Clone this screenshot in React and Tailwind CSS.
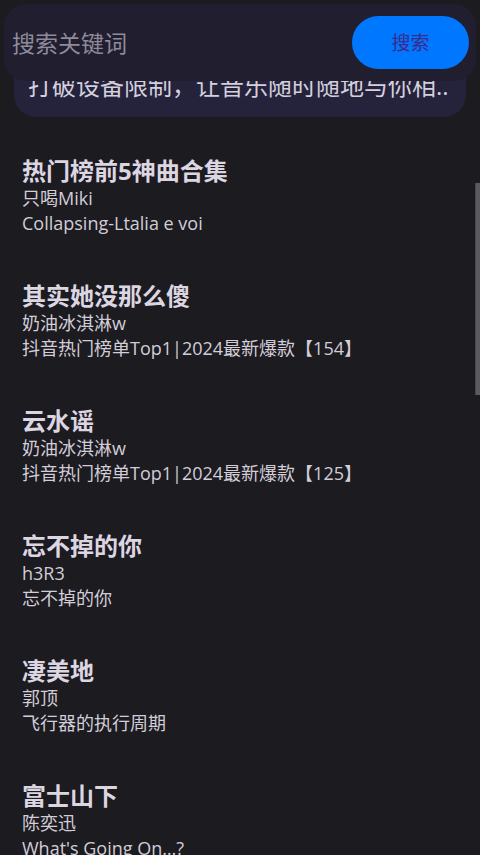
import React from "react";

const songs = [
  { title: "热门榜前5神曲合集", artist: "只喝Miki", album: "Collapsing-Ltalia e voi" },
  { title: "其实她没那么傻", artist: "奶油冰淇淋w", album: "抖音热门榜单Top1|2024最新爆款【154】" },
  { title: "云水谣", artist: "奶油冰淇淋w", album: "抖音热门榜单Top1|2024最新爆款【125】" },
  { title: "忘不掉的你", artist: "h3R3", album: "忘不掉的你" },
  { title: "凄美地", artist: "郭顶", album: "飞行器的执行周期" },
  { title: "富士山下", artist: "陈奕迅", album: "What's Going On…?" },
];

const font = { fontFamily: '"Open Sans", "Noto Sans CJK SC", "Noto Sans", sans-serif' };

const SongItem = ({ title, artist, album }) => (
  <div className="h-[125px] flex flex-col">
    <div className="text-[24px] leading-[30px] font-bold text-[#dcd6e2]">{title}</div>
    <div className="text-[18px] leading-[25px] text-[#d2cdd8]">{artist}</div>
    <div className="text-[18px] leading-[25px] text-[#d2cdd8]">{album}</div>
  </div>
);

export default function App() {
  return (
    <div className="relative h-[855px] w-[480px] overflow-hidden bg-[#1c1b20]" style={font}>
      <div className="flex flex-col">
        <div className="mx-[14px] mt-[30px] h-[87px] rounded-[22px] bg-[#25223b] flex items-end px-[14px] pb-[18px]">
          <span className="text-[24px] leading-[26px] text-[#d4d0dc] whitespace-nowrap">打破设备限制，让音乐随时随地与你相..</span>
        </div>
        <div className="px-[22px] pt-[39px]">
          {songs.map((s) => (
            <SongItem key={s.title} {...s} />
          ))}
        </div>
      </div>

      <div className="absolute left-[4px] right-[4px] top-[4px] h-[77px] rounded-[22px] bg-[#211e30] flex items-center pl-[8px] pr-[7px]">
        <input
          className="flex-1 min-w-0 mt-[2px] bg-transparent outline-none text-[23px] text-[#8f8b9b] placeholder:text-[#8f8b9b]"
          placeholder="搜索关键词"
          style={font}
        />
        <button className="w-[117px] h-[53px] rounded-full bg-[#0077ff] pt-[2px] text-[19px] text-[#3d2a8a]">搜索</button>
      </div>

      <div className="absolute right-0 top-[183px] w-[5px] h-[212px] bg-[#5b5a5f] border-l border-[#48474c]" />
    </div>
  );
}
